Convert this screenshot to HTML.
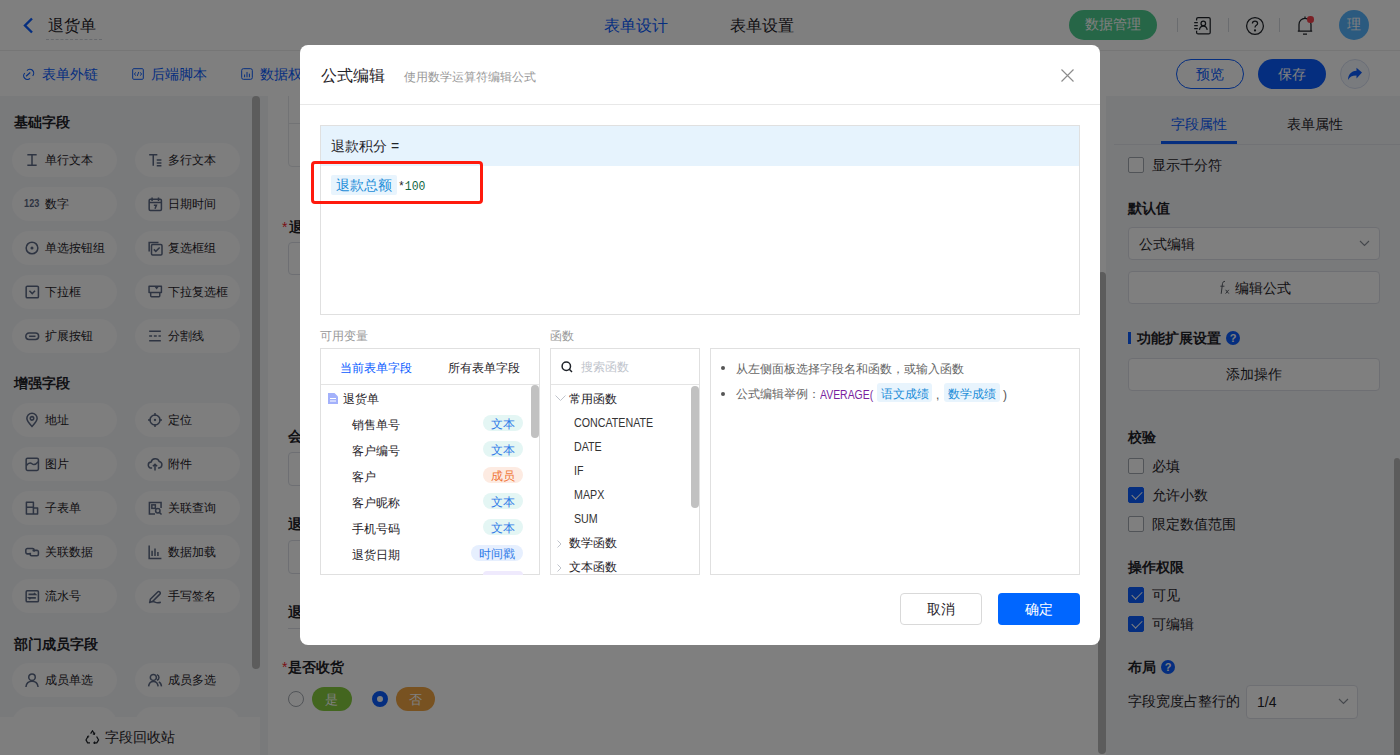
<!DOCTYPE html>
<html><head><meta charset="utf-8">
<style>
*{box-sizing:border-box;margin:0;padding:0}
html,body{width:1400px;height:755px;overflow:hidden;background:#fff;font-family:"Liberation Sans",sans-serif;color:#1f2329}
.a{position:absolute}
.t{position:absolute;white-space:nowrap;line-height:1}
#hdr{left:0;top:0;width:1400px;height:50px;background:#fff}
#sub{left:0;top:50px;width:1400px;height:46px;background:#fff}
#lp{left:0;top:96px;width:268px;height:659px;background:#f3f4f7;overflow:hidden}
#cv{left:268px;top:96px;width:838px;height:659px;background:#fff;overflow:hidden}
#rp{left:1106px;top:96px;width:294px;height:659px;background:#f3f4f7;overflow:hidden}
.pill{position:absolute;width:105px;height:34px;border-radius:17px;background:#fcfcfd}
.pill .ic{position:absolute;left:13px;top:10px;width:14px;height:14px}
.pill span{position:absolute;left:33px;top:11px;font-size:12px;line-height:1;white-space:nowrap;color:#1f2329}
.sec{position:absolute;left:14px;font-size:14px;margin-top:-1px;font-weight:bold;line-height:1;color:#1f2329}
#mask{left:0;top:0;width:1400px;height:755px;background:rgba(0,0,0,.5)}
#modal{left:300px;top:45px;width:800px;height:600px;background:#fff;border-radius:8px;overflow:hidden}

.cb{position:absolute;left:22px;width:16px;height:16px;border:1px solid #a3a8b0;border-radius:2px;background:#fff}
.cb.on{background:#0a5cff;border-color:#0a5cff}
.cb.on::after{content:"";position:absolute;left:4.5px;top:0.5px;width:5px;height:9px;border:solid #fff;border-width:0 1.7px 1.7px 0;transform:rotate(45deg)}
.cbt{left:46px;font-size:14px;margin-top:-1px;color:#1f2329}
.sec2{position:absolute;left:22px;font-size:14px;margin-top:-1px;font-weight:bold;line-height:1;color:#1f2329;white-space:nowrap}
.box{position:absolute;border:1px solid #dcdfe6;border-radius:4px;background:#fff}
.qi{position:absolute;width:14px;height:14px;border-radius:50%;background:#0a5cff;color:#fff;font-size:11px;font-weight:bold;line-height:14px;text-align:center}
.qi::after{content:"?"}
.vl{position:absolute;left:52px;font-size:12px;line-height:1;white-space:nowrap;color:#1f2329}
.tag{position:absolute;right:577px;height:16px;border-radius:8px;font-size:12px;line-height:19px;padding:0 8px;white-space:nowrap}
.tag.tx{background:#e4f6f4;color:#2f7be8}
.tag.mb{background:#fdebe2;color:#f07636}
.tag.ts{background:#e6effe;color:#2f7be8}
.fn{position:absolute;left:274px;font-size:12px;line-height:1;white-space:nowrap;color:#333;transform:scaleX(0.89);transform-origin:0 0}
</style></head><body>
<div id="hdr" class="a">
 <svg class="a" style="left:22px;top:17px" width="12" height="17" viewBox="0 0 12 17"><polyline points="10,1.5 3,8.5 10,15.5" fill="none" stroke="#0a5cff" stroke-width="2.4"/></svg>
 <div class="t" style="left:48px;top:18px;font-size:16px;color:#1f2329">退货单</div>
 <div class="a" style="left:46px;top:39px;width:56px;height:0;border-top:1px dashed #cfd3da"></div>
 <div class="t" style="left:604px;top:18px;font-size:16px;color:#0a5cff">表单设计</div>
 <div class="t" style="left:730px;top:18px;font-size:16px;color:#1f2329">表单设置</div>
 <div class="a" style="left:1069px;top:10px;width:88px;height:30px;border-radius:15px;background:#4dcc8f"></div>
 <div class="t" style="left:1085px;top:18px;font-size:14px;margin-top:-1px;color:#fff">数据管理</div>
 <div class="a" style="left:1177px;top:18px;width:1px;height:14px;background:#d5d8de"></div>
 <div class="a" style="left:1228px;top:18px;width:1px;height:14px;background:#d5d8de"></div>
 <div class="a" style="left:1279px;top:18px;width:1px;height:14px;background:#d5d8de"></div>
 <svg class="a" style="left:1193px;top:16px" width="19" height="19" viewBox="0 0 19 19" fill="none" stroke="#1f2329" stroke-width="1.25">
  <path d="M3.6 4.6V3.1a1.5 1.5 0 0 1 1.5-1.5h10.6a1.5 1.5 0 0 1 1.5 1.5v13.3a1.5 1.5 0 0 1-1.5 1.5H5.1a1.5 1.5 0 0 1-1.5-1.5v-1.6"/><path d="M1.2 6.5h3.6M1.2 9.5h3.6M1.2 12.5h3.6"/><circle cx="10.3" cy="7.4" r="2.3"/><path d="M6.4 13.8c.4-2.4 1.9-3.7 3.9-3.7s3.5 1.3 3.9 3.7"/>
 </svg>
 <svg class="a" style="left:1245px;top:16px" width="20" height="20" viewBox="0 0 20 20" fill="none" stroke="#1f2329" stroke-width="1.25">
  <circle cx="10" cy="10" r="8.4"/><path d="M7.4 7.6c0-1.6 1.2-2.6 2.6-2.6s2.6 1 2.6 2.4c0 1.9-2.6 2-2.6 4"/><circle cx="10" cy="14.4" r=".5" fill="#1f2329"/>
 </svg>
 <svg class="a" style="left:1296px;top:15px" width="19" height="21" viewBox="0 0 19 21" fill="none" stroke="#1f2329" stroke-width="1.25">
  <path d="M3 16V9.5C3 6 5.6 3.3 9 3.3s6 2.7 6 6.2V16M1.8 16h14.4M7 19.2h4M9 1.5v1.8"/>
 </svg>
 <div class="a" style="left:1307px;top:16px;width:6.5px;height:6.5px;border-radius:50%;background:#f5404a"></div>
 <div class="a" style="left:1339px;top:10px;width:30px;height:30px;border-radius:50%;background:#56b4ff"></div>
 <div class="t" style="left:1347px;top:18px;font-size:14px;margin-top:-1px;color:#fff">理</div>
</div>
<div id="sub" class="a">
 <div class="a" style="left:0;top:0;width:1400px;height:1px;background:#ececec"></div>
 <svg class="a" style="left:21px;top:17px" width="14.3" height="15.4" viewBox="0 0 13 14" fill="none" stroke="#0a5cff" stroke-width="1.05"><path d="M5.4 3.2A3.3 3.3 0 0 1 10.6 8"/><path d="M3.4 5.6A3.3 3.3 0 0 0 8.2 10.3"/><path d="M4.6 8.4L8.4 5"/></svg>
 <div class="t" style="left:42px;top:18px;font-size:14px;margin-top:-1px;color:#0a5cff">表单外链</div>
 <svg class="a" style="left:132px;top:18px" width="12" height="12" viewBox="0 0 14 14" fill="none" stroke="#0a5cff" stroke-width="1.15"><rect x="0.8" y="0.8" width="12.4" height="12.4" rx="1.2"/><path d="M4.6 5.2L2.6 7l2 1.8M9.4 5.2L11.4 7l-2 1.8M7.9 4.6L6.1 9.4"/></svg>
 <div class="t" style="left:151px;top:18px;font-size:14px;margin-top:-1px;color:#0a5cff">后端脚本</div>
 <svg class="a" style="left:241px;top:18px" width="12" height="12" viewBox="0 0 14 14" fill="none" stroke="#0a5cff" stroke-width="1.15"><rect x="0.8" y="0.8" width="12.4" height="12.4" rx="2"/><path d="M4.2 7.6v3.2M7 4.6v6.2M9.8 6.6v4.2"/></svg>
 <div class="t" style="left:260px;top:18px;font-size:14px;margin-top:-1px;color:#0a5cff">数据权限</div>
 <div class="a" style="left:1176px;top:9px;width:68px;height:30px;border-radius:15px;border:1px solid #0a5cff"></div>
 <div class="t" style="left:1196px;top:18px;font-size:14px;margin-top:-1px;color:#0a5cff">预览</div>
 <div class="a" style="left:1258px;top:9px;width:68px;height:30px;border-radius:15px;background:#0a5cff"></div>
 <div class="t" style="left:1278px;top:18px;font-size:14px;margin-top:-1px;color:#fff">保存</div>
 <div class="a" style="left:1340px;top:9px;width:30px;height:30px;border-radius:50%;border:1px solid #d6def0;background:#f3f6fc"></div>
 <svg class="a" style="left:1347px;top:17px" width="16" height="14" viewBox="0 0 16 14"><path d="M15 5.5L9.5 0.8v3C4 4.2 1.2 7.5 1 13c1.6-3 4-4.4 8.5-4.4v3z" fill="#0a5cff"/></svg>
</div>

<div id="lp" class="a">
<div class="sec" style="top:20px">基础字段</div>
<div class="sec" style="top:281px">增强字段</div>
<div class="sec" style="top:542px">部门成员字段</div>
<div class="pill" style="left:12px;top:47px"><svg class="ic" viewBox="0 0 12 12" overflow="visible"><path d="M2 1.5h8M2 10.5h8M6 1.5v9" fill="none" stroke="#5c6984" stroke-width="1.3"/></svg><span>单行文本</span></div>
<div class="pill" style="left:135px;top:47px"><svg class="ic" viewBox="0 0 12 12" overflow="visible"><path d="M1 1.5h7M4.5 1.5v9.5M7.5 6h4M7.5 8.5h4M7.5 11h4" fill="none" stroke="#5c6984" stroke-width="1.3"/></svg><span>多行文本</span></div>
<div class="pill" style="left:12px;top:91px"><svg class="ic" viewBox="0 0 12 12" overflow="visible"><text x="-0.8" y="8.5" font-size="10" font-weight="bold" fill="#5c6984" font-family="Liberation Sans" textLength="13" lengthAdjust="spacingAndGlyphs">123</text></svg><span>数字</span></div>
<div class="pill" style="left:135px;top:91px"><svg class="ic" viewBox="0 0 12 12" overflow="visible"><rect x="1" y="2" width="10.5" height="9.5" rx="1" fill="none" stroke="#5c6984" stroke-width="1.3"/><path d="M1 4.8h10.5M3.5 0.5v3M9 0.5v3M5 7h2.2l-1.2 3" fill="none" stroke="#5c6984" stroke-width="1.3"/></svg><span>日期时间</span></div>
<div class="pill" style="left:12px;top:135px"><svg class="ic" viewBox="0 0 12 12" overflow="visible"><circle cx="6" cy="6" r="5" fill="none" stroke="#5c6984" stroke-width="1.3"/><circle cx="6" cy="6" r="1.3" fill="#5c6984"/></svg><span>单选按钮组</span></div>
<div class="pill" style="left:135px;top:135px"><svg class="ic" viewBox="0 0 12 12" overflow="visible"><path d="M1 9V1.2h8" fill="none" stroke="#5c6984" stroke-width="1.3"/><rect x="3" y="3" width="9" height="9" rx="1" fill="none" stroke="#5c6984" stroke-width="1.3"/><path d="M5 7.2l1.7 1.7L10 5.6" fill="none" stroke="#5c6984" stroke-width="1.3"/></svg><span>复选框组</span></div>
<div class="pill" style="left:12px;top:179px"><svg class="ic" viewBox="0 0 12 12" overflow="visible"><rect x="1" y="1" width="10.5" height="10" rx="1" fill="none" stroke="#5c6984" stroke-width="1.3"/><path d="M3.8 5l2.4 2.4L8.6 5" fill="none" stroke="#5c6984" stroke-width="1.3"/></svg><span>下拉框</span></div>
<div class="pill" style="left:135px;top:179px"><svg class="ic" viewBox="0 0 12 12" overflow="visible"><path d="M0.9 1.1h10.6v5.3H0.9zM2.3 6.4v2.8a.8.8 0 0 0 .8.8h6.2a.8.8 0 0 0 .8-.8V6.4" fill="none" stroke="#5c6984" stroke-width="1.25" stroke-linejoin="round"/><path d="M5.6 1.5h3.6l-1.8 2.3z" fill="#5c6984"/></svg><span>下拉复选框</span></div>
<div class="pill" style="left:12px;top:223px"><svg class="ic" viewBox="0 0 12 12" overflow="visible"><rect x="0.7" y="3.5" width="11" height="5.5" rx="2.75" fill="none" stroke="#5c6984" stroke-width="1.3"/><path d="M3.5 6.25h5.5" fill="none" stroke="#5c6984" stroke-width="1.3"/></svg><span>扩展按钮</span></div>
<div class="pill" style="left:135px;top:223px"><svg class="ic" viewBox="0 0 12 12" overflow="visible"><path d="M1 2h10M1 6h2.5M5 6h2.5M9 6h2M1 10h10" fill="none" stroke="#5c6984" stroke-width="1.3"/></svg><span>分割线</span></div>
<div class="pill" style="left:12px;top:307px"><svg class="ic" viewBox="0 0 12 12" overflow="visible"><path d="M6 11.5C3 8.5 1.6 6.4 1.6 4.6a4.4 4.4 0 0 1 8.8 0c0 1.8-1.4 3.9-4.4 6.9z" fill="none" stroke="#5c6984" stroke-width="1.3"/><circle cx="6" cy="4.6" r="1.5" fill="none" stroke="#5c6984" stroke-width="1.3"/></svg><span>地址</span></div>
<div class="pill" style="left:135px;top:307px"><svg class="ic" viewBox="0 0 12 12" overflow="visible"><circle cx="6" cy="6" r="4.3" fill="none" stroke="#5c6984" stroke-width="1.3"/><circle cx="6" cy="6" r="1" fill="#5c6984"/><path d="M6 0v2.5M6 9.5V12M0 6h2.5M9.5 6H12" fill="none" stroke="#5c6984" stroke-width="1.3"/></svg><span>定位</span></div>
<div class="pill" style="left:12px;top:351px"><svg class="ic" viewBox="0 0 12 12" overflow="visible"><rect x="1" y="1" width="10.5" height="10.5" rx="1.2" fill="none" stroke="#5c6984" stroke-width="1.3"/><path d="M1.2 7.2C3 5 4.5 4.6 6 5.8s3 1 5.3-1.8" fill="none" stroke="#5c6984" stroke-width="1.3"/></svg><span>图片</span></div>
<div class="pill" style="left:135px;top:351px"><svg class="ic" viewBox="0 0 12 12" overflow="visible"><path d="M3.5 9.5H3a2.6 2.6 0 0 1-.3-5.2A3.6 3.6 0 0 1 9.6 3.8a2.9 2.9 0 0 1-.1 5.7H8.6M6 11.5V6.3M4.2 8l1.8-1.8L7.8 8" fill="none" stroke="#5c6984" stroke-width="1.3"/></svg><span>附件</span></div>
<div class="pill" style="left:12px;top:395px"><svg class="ic" viewBox="0 0 12 12" overflow="visible"><path d="M1.2 11.2V1h6v10.2zM1.2 5.4h6M7.2 6h3.6v5.2H7.2" fill="none" stroke="#5c6984" stroke-width="1.3" stroke-linejoin="round"/></svg><span>子表单</span></div>
<div class="pill" style="left:135px;top:395px"><svg class="ic" viewBox="0 0 12 12" overflow="visible"><path d="M11.2 6V1.2H1.2v10H6" fill="none" stroke="#5c6984" stroke-width="1.3"/><rect x="3.3" y="3.3" width="3" height="3" fill="none" stroke="#5c6984" stroke-width="1.3"/><circle cx="8.4" cy="8.4" r="1.9" fill="none" stroke="#5c6984" stroke-width="1.3"/><path d="M9.8 9.8l1.8 1.8" fill="none" stroke="#5c6984" stroke-width="1.3"/></svg><span>关联查询</span></div>
<div class="pill" style="left:12px;top:439px"><svg class="ic" viewBox="0 0 12 12" overflow="visible"><path d="M5.2 7.6H2a1.3 1.3 0 0 1-1.3-1.3V4.3A1.3 1.3 0 0 1 2 3h4.5a1.3 1.3 0 0 1 1.3 1.3v1.4" fill="none" stroke="#5c6984" stroke-width="1.3"/><path d="M6.4 4.6h3.8a1.3 1.3 0 0 1 1.3 1.3v2.1a1.3 1.3 0 0 1-1.3 1.3H5.7A1.3 1.3 0 0 1 4.4 8V6.6" fill="none" stroke="#5c6984" stroke-width="1.3"/></svg><span>关联数据</span></div>
<div class="pill" style="left:135px;top:439px"><svg class="ic" viewBox="0 0 12 12" overflow="visible"><path d="M1 0.5V11.5h10.5M3.5 5v4.5M6 3v6.5M8.5 6v3.5" fill="none" stroke="#5c6984" stroke-width="1.3"/></svg><span>数据加载</span></div>
<div class="pill" style="left:12px;top:483px"><svg class="ic" viewBox="0 0 12 12" overflow="visible"><rect x="1" y="1.5" width="10.5" height="9.5" rx="1" fill="none" stroke="#5c6984" stroke-width="1.3"/><path d="M3 4.6h6l-1.3-1.2M9.3 7.6h-6l1.3 1.2" fill="none" stroke="#5c6984" stroke-width="1.3"/></svg><span>流水号</span></div>
<div class="pill" style="left:135px;top:483px"><svg class="ic" viewBox="0 0 12 12" overflow="visible"><path d="M2 8.8L8.3 2.5a1.2 1.2 0 0 1 1.7 0l.2.2a1.2 1.2 0 0 1 0 1.7L3.9 10.7 1.6 11z" fill="none" stroke="#5c6984" stroke-width="1.3"/><path d="M1 11.8c2-1.3 3.5-1.3 5-.6s3 .7 5 .1" fill="none" stroke="#5c6984" stroke-width="1.3"/></svg><span>手写签名</span></div>
<div class="pill" style="left:12px;top:567px"><svg class="ic" viewBox="0 0 12 12" overflow="visible"><circle cx="6" cy="3.6" r="2.8" fill="none" stroke="#5c6984" stroke-width="1.3"/><path d="M0.8 12c.4-3.2 2.5-4.9 5.2-4.9s4.8 1.7 5.2 4.9" fill="none" stroke="#5c6984" stroke-width="1.3"/></svg><span>成员单选</span></div>
<div class="pill" style="left:135px;top:567px"><svg class="ic" viewBox="0 0 12 12" overflow="visible"><circle cx="4.6" cy="3.8" r="2.6" fill="none" stroke="#5c6984" stroke-width="1.3"/><path d="M0.5 11.5c.3-2.8 1.9-4.3 4.1-4.3s3.8 1.5 4.1 4.3M7.6 1.4a2.5 2.5 0 0 1 0 4.8M9.3 7.6c1.3.6 2 1.8 2.3 3.9" fill="none" stroke="#5c6984" stroke-width="1.3"/></svg><span>成员多选</span></div>
<div class="pill" style="left:12px;top:611px"><svg class="ic" viewBox="0 0 12 12" overflow="visible"><circle cx="6" cy="3.6" r="2.8" fill="none" stroke="#5c6984" stroke-width="1.3"/><path d="M0.8 12c.4-3.2 2.5-4.9 5.2-4.9s4.8 1.7 5.2 4.9" fill="none" stroke="#5c6984" stroke-width="1.3"/></svg><span>部门单选</span></div>
<div class="pill" style="left:135px;top:611px"><svg class="ic" viewBox="0 0 12 12" overflow="visible"><circle cx="4.6" cy="3.8" r="2.6" fill="none" stroke="#5c6984" stroke-width="1.3"/><path d="M0.5 11.5c.3-2.8 1.9-4.3 4.1-4.3s3.8 1.5 4.1 4.3M7.6 1.4a2.5 2.5 0 0 1 0 4.8M9.3 7.6c1.3.6 2 1.8 2.3 3.9" fill="none" stroke="#5c6984" stroke-width="1.3"/></svg><span>部门多选</span></div>
<div class="a" style="left:252px;top:0;width:8px;height:573px;border-radius:4px;background:#b9b9b9"></div>
<div class="a" style="left:0;top:621px;width:260px;height:38px;background:#fcfcfc"></div>
<svg class="a" style="left:85px;top:634px" width="15" height="14" viewBox="0 0 15 14" fill="none" stroke="#1f2329" stroke-width="1.2"><path d="M5.6 3.6L7.5 0.8l2 3.2M11.6 6.5l2 3.4-1.8 3H9M5 12.9H2.6l-1.6-3 1.8-3.2"/><path d="M9.8 2.6l-.4 1.6-1.6-.3M3 7.8l-.3-1.4 1.5-.4M10 11.6l-1.1 1.3 1.2 1"/></svg>
<div class="t" style="left:105px;top:635px;font-size:14px;margin-top:-1px;color:#1f2329">字段回收站</div>
</div>
<div id="cv" class="a">
 <div class="a" style="left:20px;top:-10px;width:790px;height:81px;border:1px solid #e4e6eb;border-radius:4px"></div>
 <div class="a" style="left:21px;top:27px;width:790px;height:1px;background:#e4e6eb"></div>
 <div class="t" style="left:14px;top:125px;font-size:14px;margin-top:-1px;color:#f5222d">*</div>
 <div class="t" style="left:21px;top:125px;font-size:14px;margin-top:-1px;font-weight:bold;color:#1f2329">退款积分</div>
 <div class="a" style="left:20px;top:146px;width:790px;height:33px;border:1px solid #dcdfe6;border-radius:4px"></div>
 <div class="t" style="left:20px;top:334px;font-size:14px;margin-top:-1px;font-weight:bold;color:#1f2329">会员积分</div>
 <div class="a" style="left:20px;top:356px;width:790px;height:34px;border:1px solid #dcdfe6;border-radius:4px"></div>
 <div class="t" style="left:20px;top:422px;font-size:14px;margin-top:-1px;font-weight:bold;color:#1f2329">退款总额</div>
 <div class="a" style="left:20px;top:444px;width:790px;height:34px;border:1px solid #dcdfe6;border-radius:4px"></div>
 <div class="t" style="left:20px;top:510px;font-size:14px;margin-top:-1px;font-weight:bold;color:#1f2329">退货原因</div>
 <div class="a" style="left:20px;top:532px;width:790px;height:1px;background:#dcdfe6"></div>
 <div class="t" style="left:14px;top:565px;font-size:14px;margin-top:-1px;color:#f5222d">*</div>
 <div class="t" style="left:20px;top:565px;font-size:14px;margin-top:-1px;font-weight:bold;color:#1f2329">是否收货</div>
 <div class="a" style="left:20px;top:595px;width:16px;height:16px;border-radius:50%;border:1px solid #a3a8b0;background:#fff"></div>
 <div class="a" style="left:44px;top:591px;width:40px;height:24px;border-radius:12px;background:#86cc3f"></div>
 <div class="t" style="left:57px;top:597px;font-size:13px;color:#fff">是</div>
 <div class="a" style="left:104px;top:595px;width:16px;height:16px;border-radius:50%;border:5px solid #0a5cff;background:#fff"></div>
 <div class="a" style="left:128px;top:591px;width:39px;height:24px;border-radius:12px;background:#f0a443"></div>
 <div class="t" style="left:141px;top:597px;font-size:13px;color:#fff">否</div>
 <div class="a" style="left:830px;top:176px;width:8px;height:482px;border-radius:4px;background:#b9b9b9"></div>
</div>

<div id="rp" class="a">
 <div class="t" style="left:65px;top:22px;font-size:14px;margin-top:-1px;color:#0a5cff">字段属性</div>
 <div class="t" style="left:181px;top:22px;font-size:14px;margin-top:-1px;color:#1f2329">表单属性</div>
 <div class="a" style="left:8px;top:48px;width:286px;height:1px;background:#e3e5ea"></div>
 <div class="a" style="left:55px;top:45px;width:76px;height:3px;background:#0a5cff"></div>
 <div class="cb" style="top:61px"></div><div class="t cbt" style="top:63px">显示千分符</div>
 <div class="sec2" style="top:106px">默认值</div>
 <div class="box" style="left:22px;top:131px;width:252px;height:33px"></div>
 <div class="t" style="left:33px;top:142px;font-size:14px;margin-top:-1px;color:#1f2329">公式编辑</div>
 <svg class="a" style="left:253px;top:144px" width="11" height="7" viewBox="0 0 11 7"><polyline points="1,1 5.5,5.5 10,1" fill="none" stroke="#8a9099" stroke-width="1.15"/></svg>
 <div class="box" style="left:22px;top:175px;width:252px;height:33px"></div>
 <svg class="a" style="left:111px;top:184px" width="13" height="15" viewBox="0 0 13 15" fill="none" stroke="#5a5f67" stroke-width="1"><path d="M4.2 13.8L5.5 3.4Q5.9 1.2 8 1.3M3.4 6.2h4"/><path d="M8.6 9.8l3.2 3.8M11.8 9.8l-3.2 3.8"/></svg>
 
 <div class="t" style="left:129px;top:186px;font-size:14px;margin-top:-1px;color:#1f2329">编辑公式</div>
 <div class="a" style="left:22px;top:236px;width:3px;height:12px;background:#0a5cff"></div>
 <div class="sec2" style="left:31px;top:236px">功能扩展设置</div>
 <div class="qi" style="left:120px;top:235px"></div>
 <div class="box" style="left:22px;top:262px;width:252px;height:33px"></div>
 <div class="t" style="left:120px;top:272px;font-size:14px;margin-top:-1px;color:#1f2329">添加操作</div>
 <div class="sec2" style="top:335px">校验</div>
 <div class="cb" style="top:362px"></div><div class="t cbt" style="top:364px">必填</div>
 <div class="cb on" style="top:391px"></div><div class="t cbt" style="top:393px">允许小数</div>
 <div class="cb" style="top:420px"></div><div class="t cbt" style="top:422px">限定数值范围</div>
 <div class="sec2" style="top:465px">操作权限</div>
 <div class="cb on" style="top:491px"></div><div class="t cbt" style="top:493px">可见</div>
 <div class="cb on" style="top:520px"></div><div class="t cbt" style="top:522px">可编辑</div>
 <div class="sec2" style="top:565px">布局</div>
 <div class="qi" style="left:55px;top:564px"></div>
 <div class="t" style="left:22px;top:599px;font-size:14px;margin-top:-1px;color:#1f2329">字段宽度占整行的</div>
 <div class="box" style="left:140px;top:589px;width:112px;height:34px"></div>
 <div class="t" style="left:151px;top:599px;font-size:14px;color:#1f2329">1/4</div>
 <svg class="a" style="left:232px;top:602px" width="11" height="7" viewBox="0 0 11 7"><polyline points="1,1 5.5,5.5 10,1" fill="none" stroke="#8a9099" stroke-width="1.15"/></svg>
 <div class="a" style="left:288px;top:362px;width:6px;height:320px;border-radius:3px;background:#b9b9b9"></div>
</div>

<div id="mask" class="a"></div>
<div id="modal" class="a">
 <div class="t" style="left:21px;top:23px;font-size:16px;color:#1f2329">公式编辑</div>
 <div class="t" style="left:104px;top:26px;font-size:12px;color:#999">使用数学运算符编辑公式</div>
 <svg class="a" style="left:760px;top:23px" width="15" height="15" viewBox="0 0 15 15"><path d="M1.5 1.5l12 12M13.5 1.5l-12 12" stroke="#8c8c8c" stroke-width="1.15"/></svg>
 <div class="a" style="left:0;top:59px;width:800px;height:1px;background:#e8e8e8"></div>
 <div class="a" style="left:20px;top:80px;width:760px;height:190px;border:1px solid #e0e0e0"></div>
 <div class="a" style="left:21px;top:81px;width:758px;height:40px;background:#e6f3fd"></div>
 <div class="t" style="left:31px;top:95px;font-size:14px;margin-top:-1px;color:#1f2329">退款积分 =</div>
 <div class="a" style="left:31px;top:130px;width:66px;height:20px;border-radius:2px;background:#e8f4fd"></div>
 <div class="t" style="left:36px;top:133px;font-size:14px;color:#1a8cd8">退款总额</div>
 <div class="t" style="left:97.7px;top:136.4px;font-size:12px;font-family:'Liberation Mono',monospace;color:#1f2329;transform:scaleX(0.95);transform-origin:0 0">*<span style="color:#116644">100</span></div>
 <div class="a" style="left:11px;top:116px;width:172px;height:43px;border:3px solid #ff1a0d;border-radius:4px"></div>
 <div class="t" style="left:20px;top:285px;font-size:12px;color:#999">可用变量</div>
 <div class="t" style="left:250px;top:285px;font-size:12px;color:#999">函数</div>
 <div class="a" style="left:20px;top:303px;width:220px;height:272px;border:1px solid #e0e0e0;height:227px"></div>
 <div class="t" style="left:40px;top:317px;font-size:12px;color:#0a5cff">当前表单字段</div>
 <div class="t" style="left:148px;top:317px;font-size:12px;color:#1f2329">所有表单字段</div>
 <div class="a" style="left:21px;top:339px;width:218px;height:1px;background:#e4e4e4"></div>
 <svg class="a" style="left:28px;top:348px" width="10" height="11" viewBox="0 0 10 11"><path d="M0 0h6.5L10 3.5V11H0z" fill="#a3b1fb"/><path d="M2 5.5h6M2 8h6" stroke="#fff" stroke-width="1"/></svg>
 <div class="t" style="left:43px;top:348px;font-size:12px;color:#1f2329">退货单</div>
 <div class="vl" style="top:374px">销售单号</div><div class="tag tx" style="top:370px">文本</div>
 <div class="vl" style="top:400px">客户编号</div><div class="tag tx" style="top:396px">文本</div>
 <div class="vl" style="top:426px">客户</div><div class="tag mb" style="top:422px">成员</div>
 <div class="vl" style="top:452px">客户昵称</div><div class="tag tx" style="top:448px">文本</div>
 <div class="vl" style="top:478px">手机号码</div><div class="tag tx" style="top:474px">文本</div>
 <div class="vl" style="top:504px">退货日期</div><div class="tag ts" style="top:500px">时间戳</div>
 <div class="a" style="left:183px;top:526px;width:40px;height:4px;border-radius:8px 8px 0 0;background:#efeafd"></div>
 <div class="a" style="left:231px;top:340px;width:8px;height:53px;border-radius:4px;background:#c1c1c1"></div>
 <div class="a" style="left:250px;top:303px;width:150px;height:227px;border:1px solid #e0e0e0"></div>
 <svg class="a" style="left:261px;top:316px" width="12" height="12" viewBox="0 0 12 12" fill="none" stroke="#1f2329" stroke-width="1.5"><circle cx="5.3" cy="5.3" r="4.2"/><path d="M8.3 8.3l2.7 2.7"/></svg>
 <div class="t" style="left:281px;top:316px;font-size:12px;color:#c0c4cc">搜索函数</div>
 <div class="a" style="left:251px;top:339px;width:148px;height:1px;background:#e4e4e4"></div>
 <svg class="a" style="left:255px;top:350px" width="11" height="7" viewBox="0 0 11 7"><polyline points="0.5,0.5 5.5,5.5 10.5,0.5" fill="none" stroke="#c0c4cc" stroke-width="1"/></svg>
 <div class="t" style="left:269px;top:348px;font-size:12px;color:#1f2329">常用函数</div>
 <div class="fn" style="top:372px">CONCATENATE</div>
 <div class="fn" style="top:396px">DATE</div>
 <div class="fn" style="top:420px">IF</div>
 <div class="fn" style="top:444px">MAPX</div>
 <div class="fn" style="top:468px">SUM</div>
 <svg class="a" style="left:257px;top:495px" width="5" height="8" viewBox="0 0 5 8"><polyline points="0.5,0.5 4,4 0.5,7.5" fill="none" stroke="#c0c4cc" stroke-width="1"/></svg>
 <div class="t" style="left:269px;top:492px;font-size:12px;color:#1f2329">数学函数</div>
 <svg class="a" style="left:257px;top:519px" width="5" height="8" viewBox="0 0 5 8"><polyline points="0.5,0.5 4,4 0.5,7.5" fill="none" stroke="#c0c4cc" stroke-width="1"/></svg>
 <div class="t" style="left:269px;top:516px;font-size:12px;color:#1f2329">文本函数</div>
 <div class="a" style="left:391px;top:341px;width:8px;height:122px;border-radius:4px;background:#c1c1c1"></div>
 <div class="a" style="left:410px;top:303px;width:370px;height:227px;border:1px solid #e0e0e0"></div>
 <div class="a" style="left:421px;top:321px;width:4px;height:4px;border-radius:50%;background:#555"></div>
 <div class="t" style="left:436px;top:318px;font-size:12px;color:#666">从左侧面板选择字段名和函数，或输入函数</div>
 <div class="a" style="left:421px;top:347px;width:4px;height:4px;border-radius:50%;background:#555"></div>
 <div class="t" style="left:436px;top:343px;font-size:12px;color:#666">公式编辑举例：</div>
 <div class="t" style="left:520px;top:344px;font-size:12px;color:#7a1fa0;transform:scaleX(0.87);transform-origin:0 0">AVERAGE(</div>
 <div class="a" style="left:577px;top:338px;width:55px;height:19px;border-radius:3px;background:#e8f4fd"></div>
 <div class="t" style="left:581px;top:343px;font-size:12px;color:#1a8cd8">语文成绩</div>
 <div class="t" style="left:636px;top:344px;font-size:12px;color:#555">,</div>
 <div class="a" style="left:644px;top:338px;width:56px;height:19px;border-radius:3px;background:#e8f4fd"></div>
 <div class="t" style="left:648px;top:343px;font-size:12px;color:#1a8cd8">数学成绩</div>
 <div class="t" style="left:703px;top:344px;font-size:12px;color:#555">)</div>
 <div class="a" style="left:600px;top:548px;width:82px;height:32px;border:1px solid #d9d9d9;border-radius:4px"></div>
 <div class="t" style="left:627px;top:558px;font-size:14px;margin-top:-1px;color:#1f2329">取消</div>
 <div class="a" style="left:698px;top:548px;width:82px;height:32px;border-radius:4px;background:#0066ff"></div>
 <div class="t" style="left:725px;top:558px;font-size:14px;margin-top:-1px;color:#fff">确定</div>
</div>

</body></html>
